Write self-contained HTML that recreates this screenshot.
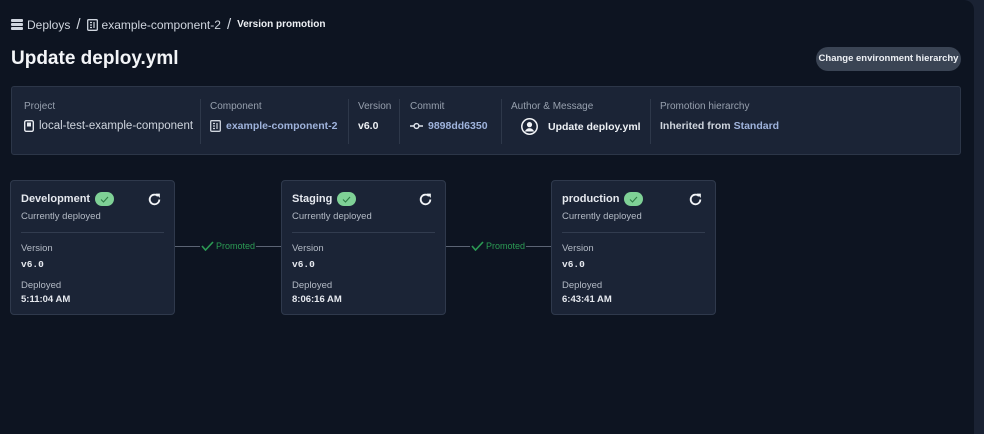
<!DOCTYPE html>
<html><head><style>
*{box-sizing:border-box;margin:0;padding:0}
body{width:984px;height:434px;background:#1a2233;font-family:"Liberation Sans",sans-serif;color:#e6e9ef;overflow:hidden;position:relative}
.main{position:absolute;left:0;top:0;width:974px;height:434px;background:#0d1421;border-radius:0 10px 0 0}
.crumb{position:absolute;top:16px;left:11px;font-size:12px;color:#cfd5de;display:flex;align-items:center;gap:4px}
.crumb .sep{font-size:15px;color:#cfd5de;margin:0 2px}
h1{position:absolute;top:48px;left:11px;font-size:19px;font-weight:bold;color:#f3f5f8}
.btn{position:absolute;left:816px;top:47px;width:145px;height:24px;border-radius:12px;background:#3a4454;color:#eef1f5;font-size:9.5px;font-weight:bold;line-height:24px;text-align:center;white-space:nowrap}
.info{position:absolute;left:11px;top:86px;width:950px;height:69px;background:#1b2436;border:1px solid #2c3648;border-radius:3px}
.col{position:absolute;top:0;height:69px}
.col .l{position:absolute;top:14px;font-size:10px;color:#97a0ae;white-space:nowrap}
.col .v{position:absolute;top:33px;font-size:11px;white-space:nowrap;display:flex;align-items:center;gap:5px}
.div{position:absolute;top:12px;width:1px;height:45px;background:#2e384a}
.link{color:#9fb3dc}
.b{font-weight:bold;color:#eef1f5;font-size:10.5px!important}
.card{position:absolute;top:180px;width:165px;height:135px;background:#1b2436;border:1px solid #2f394c;border-radius:4px}
.card .t{position:absolute;left:10px;top:11px;font-size:11px;font-weight:bold;display:flex;align-items:center;gap:5px}
.badge{width:19px;height:14px;border-radius:7px;background:#7fd196;display:inline-flex;align-items:center;justify-content:center}
.card .s{position:absolute;left:10px;top:30px;font-size:9.5px;color:#b4bbc6}
.card .hr{position:absolute;left:10px;right:10px;top:51px;height:1px;background:#323c4f}
.card .k{position:absolute;left:10px;font-size:9.5px;color:#b4bbc6}
.card .mono{position:absolute;left:10px;font-family:"Liberation Mono",monospace;font-size:9.5px;font-weight:bold}
.card .d{position:absolute;left:10px;font-size:9.5px;font-weight:bold}
.card svg.r{position:absolute;right:12px;top:11px}
.conn{position:absolute;top:246px;height:1px;background:#5b6474}
.prom{position:absolute;top:241px;font-size:9px;color:#2c9b54;display:flex;align-items:center;gap:2px;background:#0d1421;padding:0 1px}
</style></head><body>
<div class="main">
<div class="crumb">
<svg width="12" height="11" viewBox="0 0 12 11"><rect x="0" y="0" width="12" height="3" rx="1" fill="#cfd5de"/><rect x="0" y="4" width="12" height="3" rx="1" fill="#cfd5de"/><rect x="0" y="8" width="12" height="3" rx="1" fill="#cfd5de"/></svg>
<span>Deploys</span><span class="sep">/</span>
<svg width="11" height="12" viewBox="0 0 11 12"><rect x="0.7" y="0.7" width="9.6" height="10.6" rx="1" fill="none" stroke="#cfd5de" stroke-width="1.3"/><path d="M3 3.5h2M3 6h2M3 8.5h2M7 3v6" stroke="#cfd5de" stroke-width="1.2"/></svg>
<span>example-component-2</span><span class="sep">/</span>
<span style="font-size:10px;font-weight:bold;color:#eef1f5">Version promotion</span>
</div>
<h1>Update deploy.yml</h1>
<div class="btn">Change environment hierarchy</div>
<div class="info">
<div class="col" style="left:12px"><div class="l">Project</div><div class="v" style="color:#cfd5de;font-size:11.5px"><svg width="10" height="12" viewBox="0 0 10 12"><rect x="0.7" y="0.7" width="8.6" height="10.6" rx="1.5" fill="none" stroke="#e6e9ef" stroke-width="1.4"/><rect x="3" y="2.5" width="4" height="4" fill="#e6e9ef"/></svg>local-test-example-component</div></div>
<div class="div" style="left:188px"></div>
<div class="col" style="left:198px"><div class="l">Component</div><div class="v link" style="font-weight:bold;font-size:10.5px"><svg width="11" height="12" viewBox="0 0 11 12"><rect x="0.7" y="0.7" width="9.6" height="10.6" rx="1" fill="none" stroke="#cfd5de" stroke-width="1.3"/><path d="M3 3.5h2M3 6h2M3 8.5h2M7 3v6" stroke="#cfd5de" stroke-width="1.2"/></svg>example-component-2</div></div>
<div class="div" style="left:336px"></div>
<div class="col" style="left:346px"><div class="l">Version</div><div class="v b">v6.0</div></div>
<div class="div" style="left:387px"></div>
<div class="col" style="left:398px"><div class="l">Commit</div><div class="v link" style="font-weight:bold;font-size:10.5px"><svg width="13" height="8" viewBox="0 0 13 8"><path d="M0 4h3.5M9.5 4H13" stroke="#dfe4ec" stroke-width="1.4"/><circle cx="6.5" cy="4" r="2.4" fill="none" stroke="#dfe4ec" stroke-width="1.4"/></svg>9898dd6350</div></div>
<div class="div" style="left:489px"></div>
<div class="col" style="left:499px"><div class="l">Author &amp; Message</div><div class="v b" style="left:10px;top:31px;gap:10px"><svg width="17" height="17" viewBox="0 0 17 17"><circle cx="8.5" cy="8.5" r="7.7" fill="none" stroke="#f2f4f7" stroke-width="1.5"/><circle cx="8.5" cy="6.6" r="2.6" fill="#f2f4f7"/><path d="M3.8 13.5c1.2-2.4 2.8-3.3 4.7-3.3s3.5.9 4.7 3.3" fill="#f2f4f7"/></svg>Update deploy.yml</div></div>
<div class="div" style="left:638px"></div>
<div class="col" style="left:648px"><div class="l">Promotion hierarchy</div><div class="v" style="font-weight:bold;color:#cfd5de;font-size:10.5px;gap:3px">Inherited from <span class="link">Standard</span></div></div>
</div>

<div class="conn" style="left:175px;width:107px"></div>
<div class="prom" style="left:200px"><svg width="13" height="10" viewBox="0 0 13 10"><path d="M1 5l3.5 4L12 1" fill="none" stroke="#2c9b54" stroke-width="1.6"/></svg>Promoted</div>
<div class="conn" style="left:445px;width:107px"></div>
<div class="prom" style="left:470px"><svg width="13" height="10" viewBox="0 0 13 10"><path d="M1 5l3.5 4L12 1" fill="none" stroke="#2c9b54" stroke-width="1.6"/></svg>Promoted</div>

<div class="card" style="left:10px">
<div class="t">Development <span class="badge"><svg width="9" height="7" viewBox="0 0 9 7"><path d="M1 3.5l2.5 2.5L8 1" fill="none" stroke="#2e7a45" stroke-width="1.1"/></svg></span></div>
<svg class="r" width="15" height="15" viewBox="0 0 14 14"><path d="M11.5 7a4.5 4.5 0 1 1-1.3-3.2" fill="none" stroke="#f2f4f7" stroke-width="1.7"/><path d="M8 1.5h4v4z" fill="#f2f4f7"/></svg>
<div class="s">Currently deployed</div><div class="hr"></div>
<div class="k" style="top:62px">Version</div><div class="mono" style="top:78px">v6.0</div>
<div class="k" style="top:99px">Deployed</div><div class="d" style="top:113px">5:11:04 AM</div>
</div>
<div class="card" style="left:281px">
<div class="t">Staging <span class="badge"><svg width="9" height="7" viewBox="0 0 9 7"><path d="M1 3.5l2.5 2.5L8 1" fill="none" stroke="#2e7a45" stroke-width="1.1"/></svg></span></div>
<svg class="r" width="15" height="15" viewBox="0 0 14 14"><path d="M11.5 7a4.5 4.5 0 1 1-1.3-3.2" fill="none" stroke="#f2f4f7" stroke-width="1.7"/><path d="M8 1.5h4v4z" fill="#f2f4f7"/></svg>
<div class="s">Currently deployed</div><div class="hr"></div>
<div class="k" style="top:62px">Version</div><div class="mono" style="top:78px">v6.0</div>
<div class="k" style="top:99px">Deployed</div><div class="d" style="top:113px">8:06:16 AM</div>
</div>
<div class="card" style="left:551px">
<div class="t">production <span class="badge"><svg width="9" height="7" viewBox="0 0 9 7"><path d="M1 3.5l2.5 2.5L8 1" fill="none" stroke="#2e7a45" stroke-width="1.1"/></svg></span></div>
<svg class="r" width="15" height="15" viewBox="0 0 14 14"><path d="M11.5 7a4.5 4.5 0 1 1-1.3-3.2" fill="none" stroke="#f2f4f7" stroke-width="1.7"/><path d="M8 1.5h4v4z" fill="#f2f4f7"/></svg>
<div class="s">Currently deployed</div><div class="hr"></div>
<div class="k" style="top:62px">Version</div><div class="mono" style="top:78px">v6.0</div>
<div class="k" style="top:99px">Deployed</div><div class="d" style="top:113px">6:43:41 AM</div>
</div>
</div>
</body></html>
